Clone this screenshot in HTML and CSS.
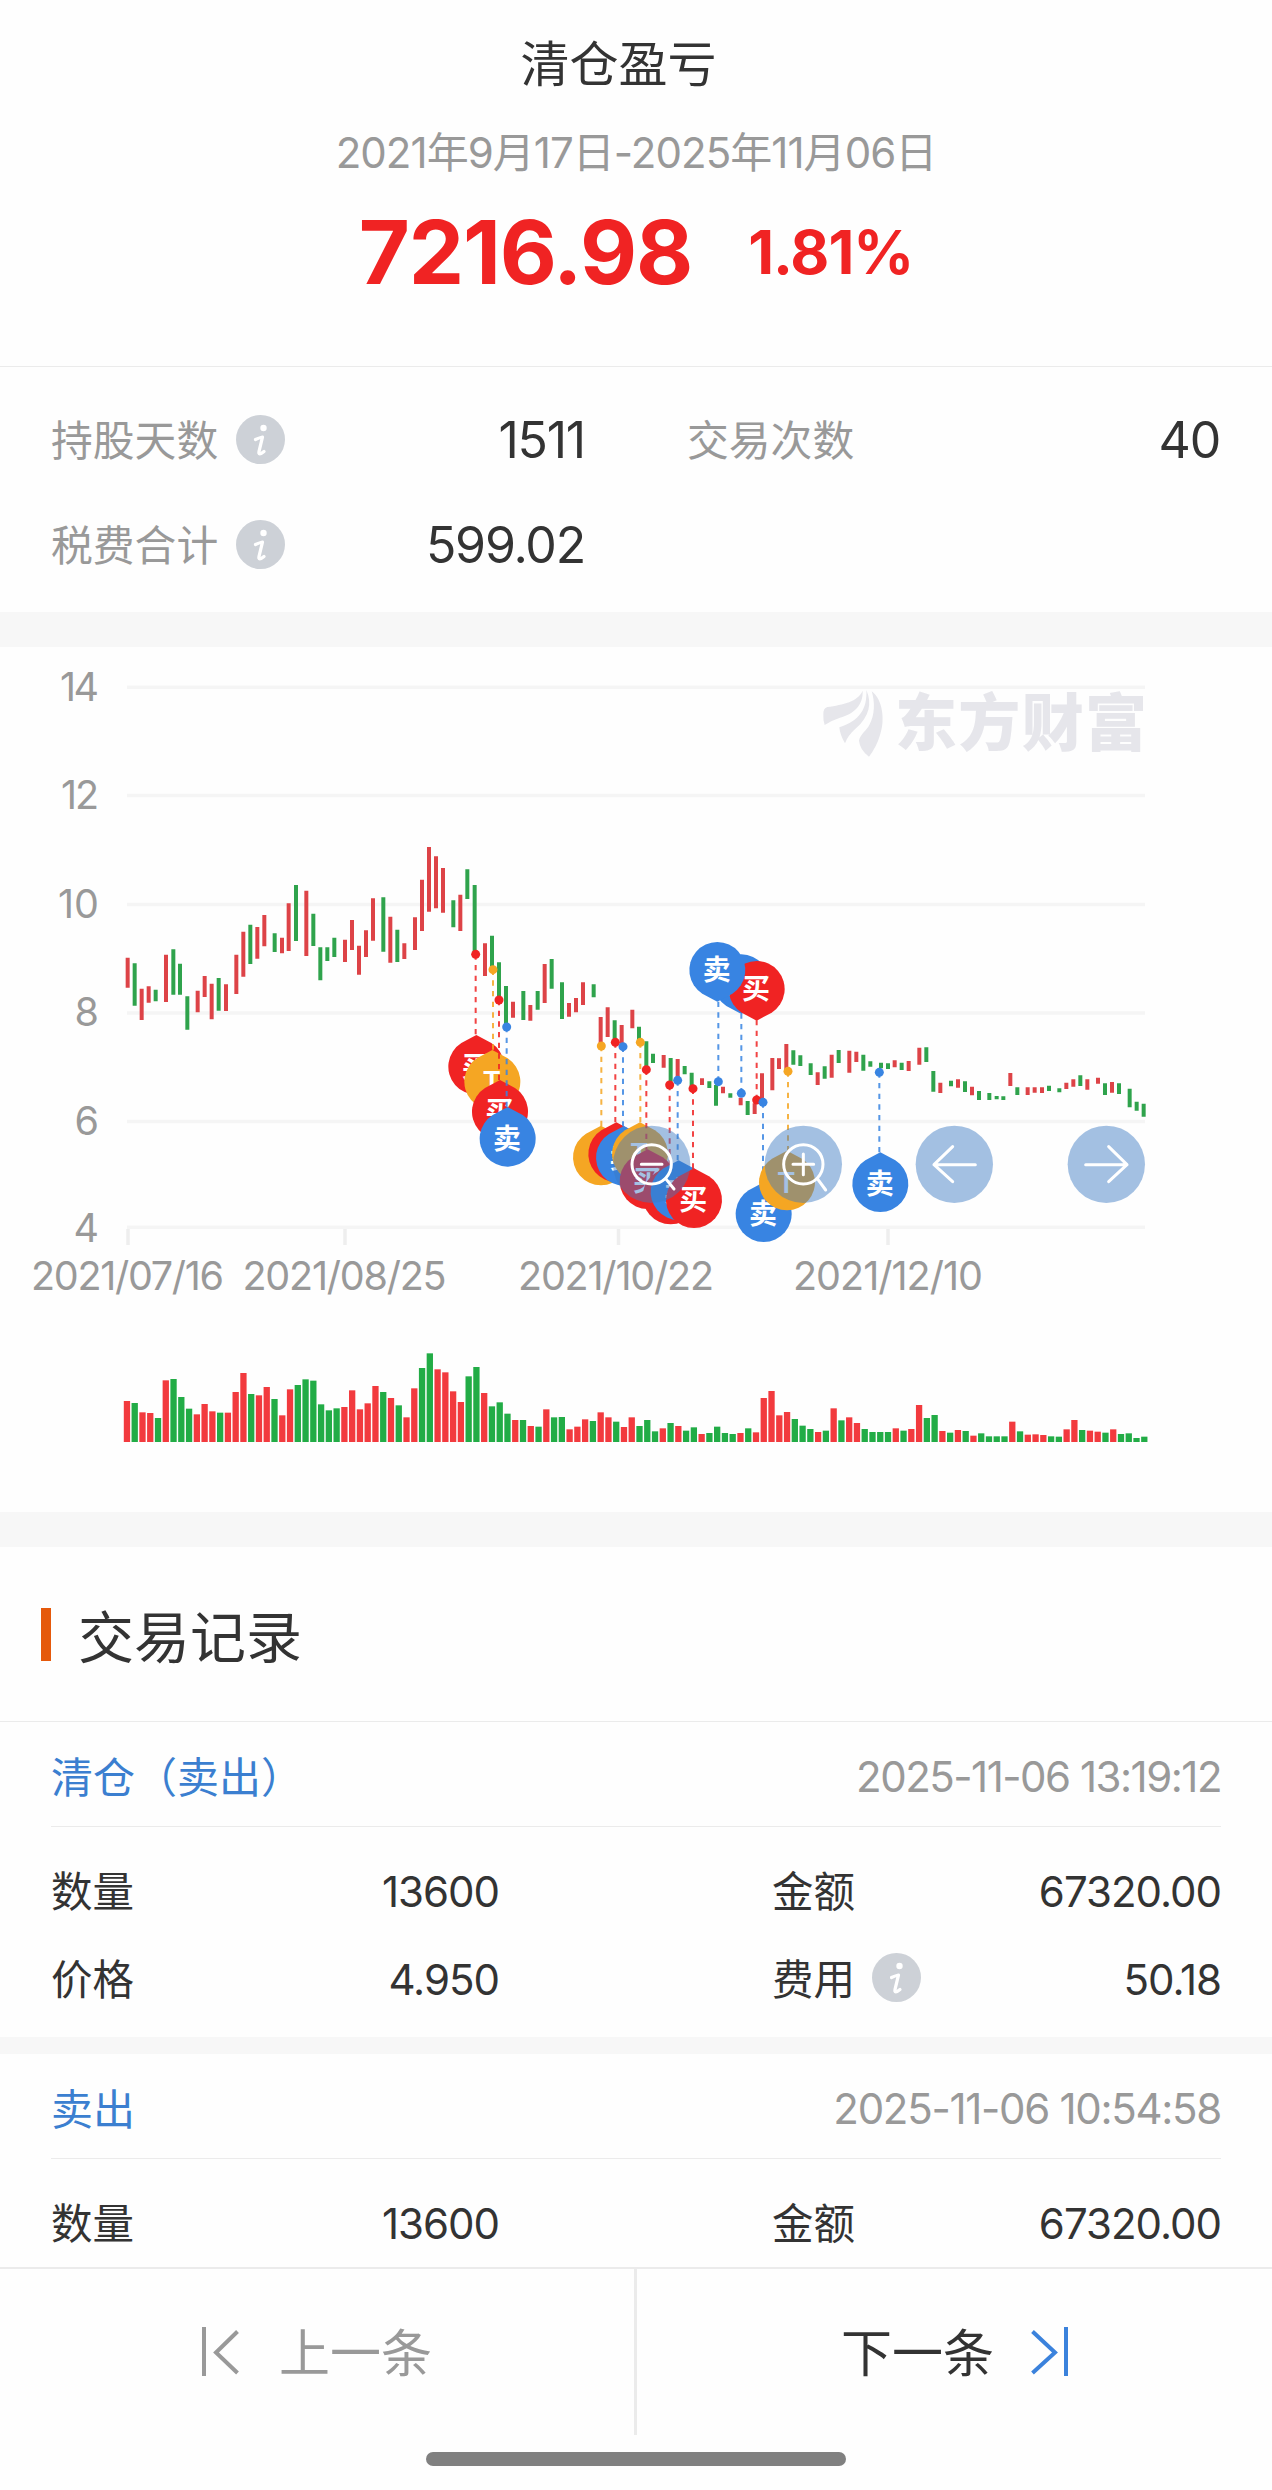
FILE: index.html
```html
<!DOCTYPE html>
<html lang="zh-CN">
<head>
<meta charset="utf-8">
<title>清仓盈亏</title>
<link rel="stylesheet" href="styles.css">
</head>
<body>
<svg class="defs" aria-hidden="true">
  <symbol id="info" viewBox="0 0 49 49">
    <circle cx="24.500" cy="24.500" r="24.500" fill="#cdd1d7"/>
    <circle cx="27.500" cy="13" r="3.200" fill="#fff"/>
    <path d="M19.500 24.500Q24 22.500 26.500 22L23 36.500Q22 41.500 28 36.500" fill="none" stroke="#fff" stroke-width="3.200" stroke-linejoin="round" stroke-linecap="round"/>
  </symbol>
</svg>

<header class="summary">
  <h1 class="summary-title">清仓盈亏</h1>
  <p class="summary-range">2021年9月17日-2025年11月06日</p>
  <div class="profit"><span class="profit-sum">7216.98</span><span class="profit-rate">1.81%</span></div>
</header>

<section class="stats">
  <div class="stat"><span class="label">持股天数</span><svg class="info"><use href="#info"/></svg><span class="num">1511</span></div>
  <div class="stat"><span class="label">交易次数</span><span class="num">40</span></div>
  <div class="stat"><span class="label">税费合计</span><svg class="info"><use href="#info"/></svg><span class="num">599.02</span></div>
</section>

<section class="chart">
<svg class="chart-svg" viewBox="0 647 1272 865" width="1272" height="865">
  <path class="grid" d="M127 687.300H1145M127 795.500H1145M127 904.500H1145M127 1013H1145M127 1121.500H1145M127 1227.300H1145"/>
  <path class="ticks" d="M128 1229V1245M345 1229V1245M618.500 1229V1245M888 1229V1245"/>
  <g class="axis axis-y">
    <text x="99" y="700.700" textLength="39">14</text><text x="99" y="809" textLength="38">12</text><text x="99" y="917.500" textLength="41">10</text>
    <text x="99" y="1026">8</text><text x="99" y="1134.500">6</text><text x="99" y="1242">4</text>
  </g>
  <g class="axis axis-x">
    <text x="127.500" y="1290" textLength="193">2021/07/16</text><text x="344.500" y="1290" textLength="204">2021/08/25</text>
    <text x="616" y="1290" textLength="196">2021/10/22</text><text x="888" y="1290" textLength="190">2021/12/10</text>
  </g>
  <g class="brand">
    <path transform="translate(780 650) scale(.33333)" d="M130 195Q129 174 142 171C190 164 233 155 248 122C250 165 222 192 180 203Q155 211 134 225Q129 210 130 195ZM259 120C277 160 268 200 228 235Q203 257 195 280Q180 255 178 232C240 212 262 175 259 120ZM275 124C310 150 315 215 300 255Q290 290 267 320Q240 300 237 272C240 255 260 240 268 225C285 195 285 155 275 124Z"/>
    <text x="895" y="746" textLength="252">东方财富</text>
  </g>
  <g transform="translate(110 820) scale(.33333)">
    <path class="up" d="M53 413V503M95 506V600M116 499V548M168 404V546M263 512V577M284 468V531M305 491V598M348 493V573M379 404V522M400 335V470M442 321V416M463 285V379M516 353V400M536 250V393M589 212V408M705 359V426M726 300V390M747 377V464M768 331V411M789 235V362M841 290V428M883 370V417M915 292V390M936 179V333M957 81V275M978 109V265M999 144V278M1051 224V333M1125 370V468"/>
    <path class="down" d="M74 430V557M137 509V544M190 388V524M210 431V524M232 529V629M326 474V572M421 314V432M494 340V396M558 195V363M610 281V378M631 382V481M652 382V423M673 353V411M820 232V395M862 329V426M1030 241V322M1072 148V237M1094 195V400M1146 347V440M1167 427V535M1188 498V615"/>
  </g>
  <g transform="translate(400 820) scale(.33333)">
    <path class="up" d="M339 545V593M391 555V602M434 432V549M507 549V590M528 534V577M549 487V555M602 591V670M623 562V651M665 615V675M697 569V625M791 705V743M833 717V775M906 775V795M969 800V820M1022 833V856M1064 850V882M1086 760V840M1117 714V811M1137 715V747M1159 672V750"/>
    <path class="down" d="M370 513V600M413 513V569M455 417V506M486 487V597M581 493V532M644 601V660M717 620V660M739 664V740M759 701V729M812 714V785M854 738V763M875 758V800M928 784V804M948 795V857M991 820V833M1043 843V885M1180 691V734"/>
  </g>
  <g transform="translate(680 900) scale(.33333)">
    <path class="up" d="M297 476V507M413 517V555M455 464V533M508 452V518M529 455V486M644 481V502M686 483V513M718 443V494M781 548V579M834 538V563M876 560V586M991 519V558M1043 562V585M1064 562V578M1086 562V579M1159 548V567M1180 538V560M1222 538V569M1254 533V551M1296 546V578"/>
    <path class="down" d="M361 466V498M392 490V525M434 499V536M476 450V489M550 464V512M571 484V500M603 488V505M624 490V507M665 488V510M739 442V486M760 513V575M813 542V559M855 544V576M897 573V600M928 579V600M950 588V598M970 589V600M1012 562V585M1107 557V573M1138 565V577M1201 526V558M1275 550V585M1317 550V582M1349 566V622M1370 605V632M1391 611V650"/>
  </g>
  <g id="pins" transform="translate(400 820) scale(.33333)"></g>
  <g class="controls" transform="translate(680 900) scale(.33333)">
    <circle class="btn" cx="-85" cy="793" r="116"/><circle class="btn" cx="370" cy="793" r="116"/>
    <circle class="btn" cx="823" cy="793" r="116"/><circle class="btn" cx="1279" cy="793" r="116"/>
    <g class="glyph">
      <circle cx="-85" cy="793" r="59"/><path d="M-116 793H-54M-43 836L-18 867"/>
      <circle cx="370" cy="793" r="59"/><path d="M339 793H401M370 762V824M412 836L437 870"/>
      <path d="M886 794H762M818 740L762 794L818 845"/>
      <path d="M1217 794H1341M1286 740L1341 794L1286 845"/>
    </g>
  </g>
  <g id="volume"></g>
</svg>
</section>

<main class="records">
  <h2 class="records-title"><span>交易记录</span></h2>
  <article class="record">
    <div class="record-head"><span class="kind">清仓（卖出）</span><time>2025-11-06 13:19:12</time></div>
    <div class="record-body">
      <span class="key">数量</span><span class="val">13600</span><span class="key">金额</span><span class="val">67320.00</span>
      <span class="key">价格</span><span class="val">4.950</span><span class="fee"><span class="key">费用</span><svg class="info"><use href="#info"/></svg></span><span class="val">50.18</span>
    </div>
  </article>
  <article class="record">
    <div class="record-head"><span class="kind">卖出</span><time class="wide">2025-11-06 10:54:58</time></div>
    <div class="record-body">
      <span class="key">数量</span><span class="val">13600</span><span class="key">金额</span><span class="val">67320.00</span>
    </div>
  </article>
</main>

<nav class="pager">
  <div class="pager-items">
    <a class="page prev"><svg width="37" height="50" viewBox="0 0 37 50"><path d="M2 0V49M35.500 4.500L14 25.500L35.500 46"/></svg><span>上一条</span></a>
    <a class="page next"><span>下一条</span><svg width="37" height="50" viewBox="0 0 37 50"><path d="M35 0V49M1.500 4.500L24 25.500L1.500 46"/></svg></a>
  </div>
  <div class="home-bar"></div>
</nav>
<script src="chart.js"></script>
</body>
</html>
```
FILE: styles.css
```css
* { box-sizing: border-box; margin: 0; padding: 0; }
body {
  width: 1272px; height: 2490px; overflow: hidden;
  background: #fefefe; color: #333;
  font-family: Inter, "Noto Sans CJK SC", sans-serif;
  font-size: 42px;
  display: flex; flex-direction: column;
}
.defs { position: absolute; width: 0; height: 0; }
.info { width: 49px; height: 49px; flex: none; display: block; }

.summary {
  height: 367px; padding-top: 35px; border-bottom: 1px solid #ebebeb;
  display: flex; flex-direction: column; align-items: center; flex: none;
}
.summary-title { font-size: 49px; font-weight: 400; line-height: 60px; margin-right: 35px; }
.summary-range { margin-top: 33px; line-height: 50px; color: #999; letter-spacing: -.95px; }
.profit {
  margin-top: 24px; height: 100px; display: flex; align-items: center; gap: 56px;
  color: #f02323; font-weight: 700; line-height: 100px;
}
.profit-sum { font-size: 88px; letter-spacing: -1.2px; }
.profit-rate { font-size: 60px; letter-spacing: -1px; }

.stats {
  height: 245px; flex: none; padding: 20px 52px 15px 52px;
  display: grid; grid-template-columns: 533px 532px; grid-template-rows: 105px 105px; column-gap: 103px;
}
.stat { display: flex; align-items: center; }
.label { color: #999; width: 185px; font-size: 41.800px; margin-left: -1px; padding-bottom: 3px; }
.num { margin-left: auto; font-size: 50px; letter-spacing: -1.2px; }

.chart { height: 935px; flex: none; border: solid #f7f7f7; border-width: 35px 0; }
.chart-svg { display: block; }
.grid, .ticks { fill: none; stroke: #f5f5f5; stroke-width: 3.500; }
.ticks { stroke: #eee; }
.axis { font-size: 39.500px; fill: #999; }
.axis-y { text-anchor: end; }
.axis-x { text-anchor: middle; }
.brand { fill: #e6e6eb; font-size: 62px; font-weight: 900; }
.up, .down { fill: none; stroke-width: 12; }
.up { stroke: #dd4347; }
.down { stroke: #2fa34c; }
.stem { stroke-width: 6; stroke-dasharray: 16 16; opacity: .85; }
.pin-text { fill: #fff; font-size: 84px; font-weight: 600; text-anchor: middle; }
.btn { fill: rgba(60, 123, 196, .465); }
.glyph { fill: none; stroke: #fff; stroke-width: 9; stroke-linecap: round; stroke-linejoin: round; }

.records { height: 720px; flex: none; overflow: hidden; }
.records-title {
  height: 175px; padding-left: 41px; border-bottom: 1px solid #ebebeb;
  display: flex; align-items: center; gap: 27px; font-size: 56px; font-weight: 400;
}
.records-title span { padding-bottom: 2px; }
.records-title::before { content: ""; width: 10px; height: 53px; background: #e5590b; }
.record { padding: 0 51px; border-bottom: 17px solid #f7f7f7; height: 332px; }
.record-head {
  height: 105px; border-bottom: 1px solid #ebebeb;
  display: flex; align-items: center; justify-content: space-between;
}
.kind { color: #3b7fd0; }
time { color: #999; letter-spacing: -1.5px; padding-top: 4px; }
time.wide { letter-spacing: -1.3px; }
.record-body {
  display: grid; grid-template-columns: 180px 268px 1fr auto; grid-auto-rows: 88px;
  align-items: center; padding-top: 20px;
}
.record-body > :nth-child(4n + 3) { margin-left: 273px; }
.key { font-size: 41.500px; padding-bottom: 5px; }
.val { text-align: right; letter-spacing: -1px; }
.fee { display: flex; align-items: center; gap: 17px; }
.fee .info { margin-bottom: 3px; }

.pager { height: 223px; flex: none; border-top: 2px solid #ebebeb; background: #fefefe; }
.pager-items { height: 166px; display: grid; grid-template-columns: 637px 635px; }
.page { display: flex; align-items: center; font-size: 51px; }
.page svg { fill: none; stroke: currentColor; stroke-width: 4; }
.page span { padding-bottom: 4px; }
.prev { color: #999; border-right: 3px solid #ebebeb; padding-left: 202px; gap: 40px; }
.next { padding-left: 204px; gap: 37px; }
.next svg { color: #3b82dc; }
.home-bar { width: 420px; height: 14px; border-radius: 7px; background: #808080; margin: 17px auto 0; }
```
FILE: chart.js
```js
const NS = "http://www.w3.org/2000/svg";
function add(parent, tag, attrs, text) {
  const el = document.createElementNS(NS, tag);
  for (const key in attrs) el.setAttribute(key, attrs[key]);
  if (text) el.textContent = text;
  parent.appendChild(el);
}

// Trade pins: colour, dot x, dot y, pin centre x, pin centre y, label
const RED = "#f02323", BLUE = "#3884e2", GOLD = "#f5a623";
const trades = [
  [RED, 227, 403, 229, 740, "买"], [GOLD, 279, 449, 277, 785, "T"],
  [RED, 297, 540, 300, 875, "买"], [BLUE, 320, 621, 323, 956, "卖"],
  [GOLD, 604, 678, 603, 1012, "T"], [RED, 646, 667, 649, 1002, "买"],
  [BLUE, 669, 680, 672, 1013, "卖"], [GOLD, 721, 667, 720, 1002, "T"],
  [RED, 739, 749, 743, 1083, "买"], [RED, 809, 795, 812, 1129, "买"],
  [BLUE, 833, 781, 836, 1116, "卖"], [RED, 879, 806, 882, 1140, "买"],
  [BLUE, 1024, 820, 1024, 487, "卖"], [RED, 1070, 840, 1070, 507, "买"],
  [BLUE, 955, 785, 952, 450, "卖"],
  [BLUE, 1089, 847, 1091, 1182, "卖"], [GOLD, 1164, 754, 1161, 1087, "T"],
  [BLUE, 1438, 757, 1441, 1092, "卖"]
];
const pins = document.getElementById("pins");
for (const [color, dx, dy, x, y, label] of trades) {
  const flip = y < dy ? -1 : 1;
  add(pins, "path", { class: "stem", stroke: color, d: `M${dx} ${dy}V${y - 94 * flip}` });
  add(pins, "circle", { cx: dx, cy: dy, r: 13.5, fill: color });
  add(pins, "path", {
    fill: color, transform: `translate(${x} ${y}) scale(1 ${flip})`,
    d: "M0-95L45-71A84 84 0 1 1-45-71Z"
  });
  add(pins, "text", { class: "pin-text", x: x - 2, y: y + 31 }, label);
}

// Daily volume: r = rising day, g = falling day
const volumes = `r123 g117 r89 r87 g72 r185 g189 g135 g100 r83 r114 r92 g88 r88 r150 r207 g144 r140 r165 g129
r80 r158 g171 g188 g184 g113 g95 g101 r105 r155 r98 r116 r168 g150 r132 g110 r74 r161 g222 g266
r218 r209 r152 r120 g197 g225 r147 g107 g119 g85 r66 g66 r48 g46 r98 g74 g75 r38 r46 r68
g63 r89 r74 g61 r45 r74 g48 g66 g32 r41 g57 r48 g34 g44 r24 g27 g46 g27 g24 r27
g41 r29 r132 r153 r80 r90 g69 g49 g39 r30 g34 r101 g65 r74 r57 g39 g30 g30 g30 r41
g34 r39 r111 g72 g81 r33 g28 r36 g33 r19 g26 g17 g17 g17 r61 g32 r22 r23 r21 g17
g16 r38 r66 g36 r34 r31 g28 r38 g24 g26 g12 g16`.split(/\s+/);
const volume = document.getElementById("volume");
volumes.forEach((v, i) => {
  const h = v.slice(1) / 3;
  add(volume, "rect", {
    x: 123.8 + i * 7.766, y: 1442 - h, width: 6.3, height: h,
    fill: v[0] === "r" ? "#f23a3e" : "#22ac46"
  });
});
```
